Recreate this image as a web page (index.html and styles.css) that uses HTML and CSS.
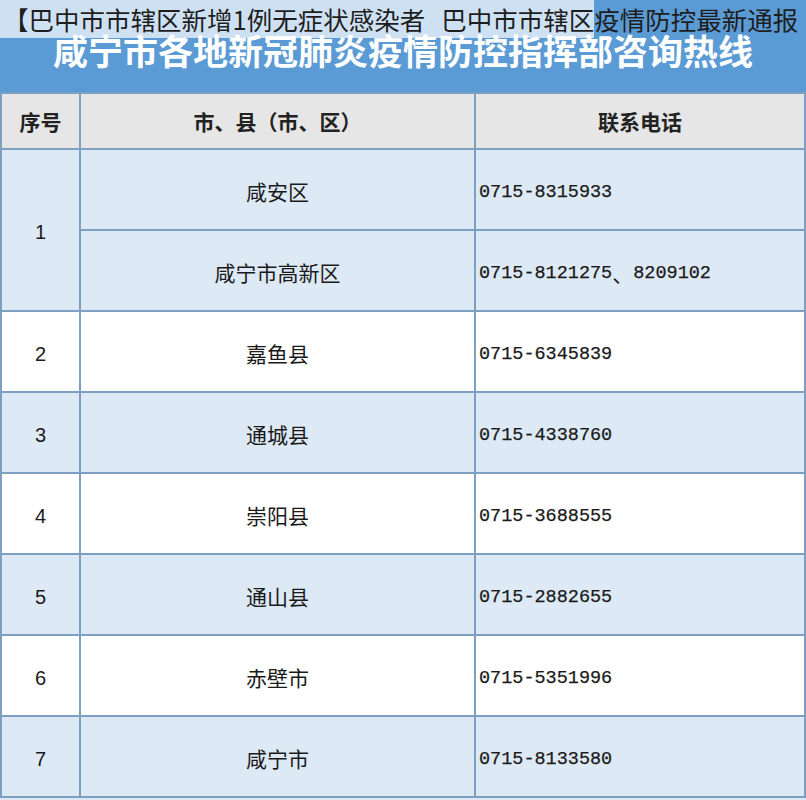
FILE: index.html
```html
<!DOCTYPE html>
<html lang="zh-CN">
<head>
<meta charset="utf-8">
<title>咸宁市各地新冠肺炎疫情防控指挥部咨询热线</title>
<link rel="stylesheet" href="styles.css">
</head>
<body>
<div class="page">
  <div class="caption"><span class="caption-bg">【巴中市市辖区新增1例无症状感染者<span class="gap"></span>巴中市市辖区</span>疫情防控最新通报</div>
  <div class="banner">咸宁市各地新冠肺炎疫情防控指挥部咨询热线</div>
  <div class="grid">
    <div class="cell head">序号</div>
    <div class="cell head">市、县（市、区）</div>
    <div class="cell head">联系电话</div>

    <div class="cell num blue span2">1</div>
    <div class="cell name blue">咸安区</div>
    <div class="cell tel blue">0715-8315933</div>
    <div class="cell name blue">咸宁市高新区</div>
    <div class="cell tel blue">0715-8121275<span class="cjk">、</span>8209102</div>

    <div class="cell num">2</div>
    <div class="cell name">嘉鱼县</div>
    <div class="cell tel">0715-6345839</div>

    <div class="cell num blue">3</div>
    <div class="cell name blue">通城县</div>
    <div class="cell tel blue">0715-4338760</div>

    <div class="cell num">4</div>
    <div class="cell name">崇阳县</div>
    <div class="cell tel">0715-3688555</div>

    <div class="cell num blue">5</div>
    <div class="cell name blue">通山县</div>
    <div class="cell tel blue">0715-2882655</div>

    <div class="cell num">6</div>
    <div class="cell name">赤壁市</div>
    <div class="cell tel">0715-5351996</div>

    <div class="cell num blue">7</div>
    <div class="cell name blue">咸宁市</div>
    <div class="cell tel blue">0715-8133580</div>
  </div>
</div>
</body>
</html>
```

FILE: styles.css
```css
html, body {
  margin: 0;
  padding: 0;
  background: #dfe9f3;
}
.page {
  position: relative;
  width: 806px;
  height: 800px;
  overflow: hidden;
  font-family: "Noto Sans CJK SC", sans-serif;
}
.caption {
  position: absolute;
  top: 0;
  left: 0;
  width: 820px;
  height: 38px;
  line-height: 38px;
  white-space: nowrap;
  font-size: 25.5px;
  color: #1e1e1e;
  padding-left: 3px;
  margin-left: -3px;
}
.caption-bg {
  display: inline-block;
  height: 38px;
  padding-left: 3px;
  background: rgba(255, 255, 255, 0.7);
}
.gap {
  display: inline-block;
  width: 16px;
}
.banner {
  height: 92px;
  box-sizing: border-box;
  padding-top: 26px;
  background: #5b9bd5;
  color: #ffffff;
  text-align: center;
  font-size: 35px;
  font-weight: 700;
  line-height: 48px;
}
.grid {
  display: grid;
  grid-template-columns: 77px 393px 328px;
  grid-template-rows: 54px repeat(8, 79px);
  gap: 2px;
  padding: 2px;
  background: #7c9fc2;
}
.cell {
  display: flex;
  align-items: center;
  background: #ffffff;
  color: #1a1a1a;
}
.blue {
  background: #dde9f5;
}
.head {
  background: #e6e6e6;
  justify-content: center;
  font-size: 21px;
  font-weight: 700;
  color: #222222;
}
.num {
  justify-content: center;
  font-family: "Liberation Sans", sans-serif;
  font-size: 20px;
  padding-top: 5px;
}
.span2 {
  grid-row: span 2;
}
.name {
  justify-content: center;
  font-size: 21px;
  padding-top: 2px;
}
.tel {
  padding-left: 3px;
  padding-top: 5px;
  font-family: "Liberation Mono", monospace;
  font-size: 18.5px;
  -webkit-text-stroke: 0.25px #1a1a1a;
}
.cjk {
  font-family: "Noto Sans CJK SC", sans-serif;
  font-size: 21px;
  -webkit-text-stroke: 0;
}
```
